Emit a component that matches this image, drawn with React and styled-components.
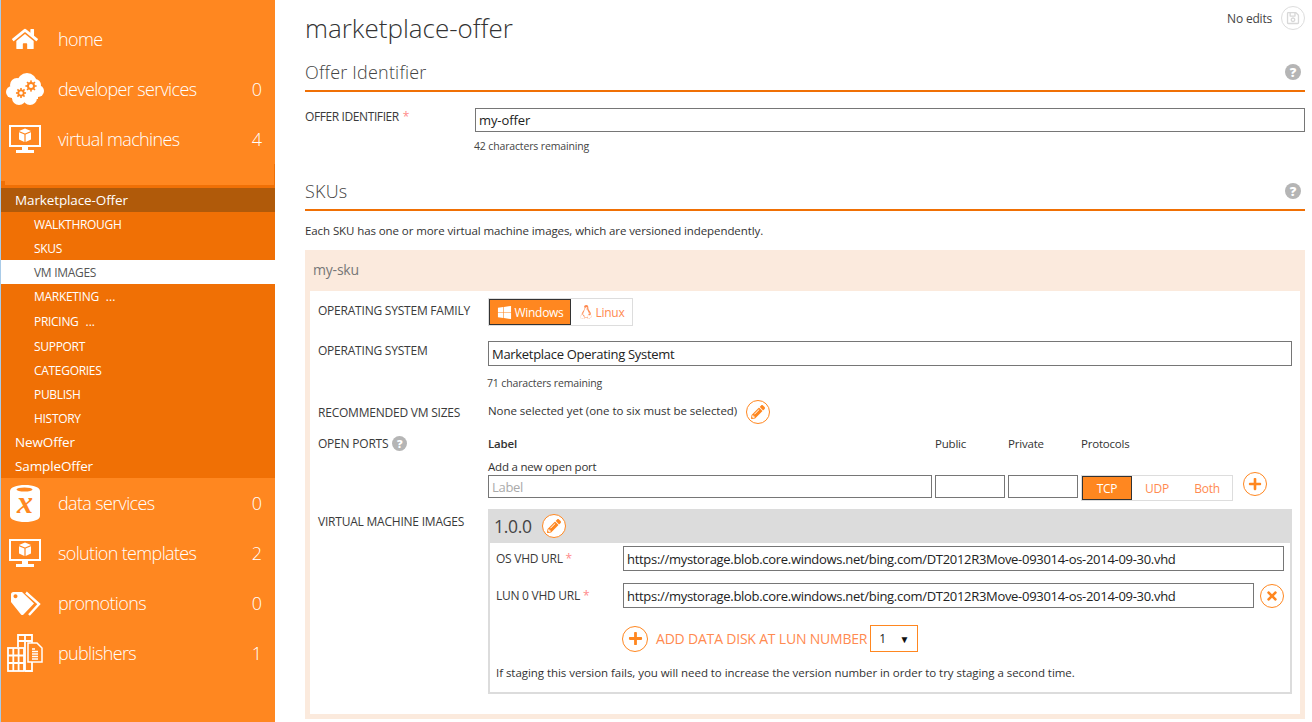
import React from "react";
import styled, { createGlobalStyle } from "styled-components";
import { FaHome, FaPencilAlt, FaPlus, FaTimes, FaWindows, FaLinux, FaRegSave } from "react-icons/fa";

const Global = createGlobalStyle`
  html, body { margin: 0; padding: 0; height: 100%; overflow: hidden; background: #fff; }
  * { box-sizing: border-box; }
  body { font-family: "Open Sans", "Noto Sans", sans-serif; font-size: 12px; color: #333; }
`;
const Page = styled.div`display: flex; width: 1312px; height: 722px; overflow: hidden;`;
const Sidebar = styled.nav`
  width: 275px; flex: none; height: 722px; background: #ff8720; border-left: 1px solid #a9cbe8;
  padding-top: 14px; color: #fff;
`;
const NavItem = styled.div`
  display: flex; align-items: center; height: 50px; padding-right: 13px;
`;
const NavIcon = styled.div`
  width: 57px; flex: none; display: flex; justify-content: center; padding-right: 9px; color: #fff;
`;
const NavText = styled.span`
  flex: 1; font-weight: 300; font-size: 18px; letter-spacing: -0.65px; white-space: nowrap;
`;
const NavCount = styled.span`font-weight: 300; font-size: 18px;`;
const Spacer = styled.div`height: 21px;`;
const SubNav = styled.div`
  position: relative; background: #f07005; padding-top: 3px;
  &::before { content: ""; position: absolute; left: 0; top: -4px; width: 4px; height: 4px; background: #f07005; }
  &::after { content: ""; position: absolute; right: 0; top: -21px; width: 1px; height: 21px; background: #f07005; }
`;
const OfferRow = styled.div`
  height: 24px; display: flex; align-items: center; padding-left: 14px; font-size: 13.5px; letter-spacing: -0.12px; color: #fff;
  background: ${p => (p.$active ? "#b05a0a" : "transparent")};
`;
const SubItem = styled.div`
  height: ${p => p.$h || 24}px; display: flex; align-items: center; padding-left: 33px; font-size: 12px; letter-spacing: -0.3px;
  color: ${p => (p.$active ? "#555" : "#fff")}; background: ${p => (p.$active ? "#fff" : "transparent")};
`;
const Dots = styled.span`margin-left: 7px; font-size: 12px; letter-spacing: 0;`;

const Main = styled.main`flex: 1; padding: 0 7px 0 30px; position: relative; min-width: 0;`;
const Title = styled.h1`
  margin: 0; height: 56px; display: flex; align-items: center; font-weight: 300; font-size: 26px; letter-spacing: 0; color: #333;
`;
const SaveArea = styled.div`
  position: absolute; right: 7px; top: 6px; display: flex; align-items: center; gap: 9px; font-size: 12px; letter-spacing: -0.2px; color: #444;
`;
const SaveCircle = styled.span`
  width: 24px; height: 24px; border-radius: 50%; border: 1px solid #ddd; color: #d8d8d8; display: flex; align-items: center; justify-content: center; font-size: 14px;
`;
const SectionHead = styled.div`
  display: flex; align-items: flex-end; justify-content: space-between; height: ${p => p.$h || 36}px; line-height: 24px;
  border-bottom: 2px solid #f07005; font-weight: 300; font-size: 18px; letter-spacing: 0.2px; padding: 0 4px 6px 0; color: #444;
`;
const HelpDot = styled.span`
  width: ${p => p.$s || 16}px; height: ${p => p.$s || 16}px; border-radius: 50%; background: #b5b5b5; color: #fff; display: inline-flex;
  align-items: center; justify-content: center; font-weight: 800; font-size: ${p => (p.$s ? 11 : 13)}px; letter-spacing: 0; flex: none; line-height: 1;
`;
const SectionHelp = styled(HelpDot)`margin-bottom: 4px;`;
const IdRow = styled.div`display: grid; grid-template-columns: 170px 1fr; margin-top: 16px;`;
const Label = styled.label`
  font-size: 12px; letter-spacing: ${p => p.$ls || "-0.22px"}; color: #3a3a3a; text-transform: uppercase; white-space: nowrap; display: flex; align-items: center; gap: 4px; height: ${p => p.$h || 18}px;
`;
const Req = styled.span`color: #ff8a8a;`;
const Input = styled.input`
  display: block; width: ${p => p.$w || "100%"}; height: ${p => p.$h || 25}px; border: 1px solid #767676; padding: 0 3px; margin: 0; background: #fff; outline: none;
  font-family: "Open Sans", sans-serif; font-size: 13px; letter-spacing: ${p => p.$ls || "-0.3px"}; color: #222; flex: ${p => (p.$grow ? 1 : "none")}; min-width: 0;
  &::placeholder { color: #aaa; }
`;
const Hint = styled.div`font-size: 10.5px; letter-spacing: -0.15px; color: #444; margin-top: ${p => p.$m || 7}px; margin-left: -1px; line-height: 14px;`;
const Desc = styled.p`margin: 11px 0 10px; font-size: 11.5px; letter-spacing: -0.09px; line-height: 18px; color: #333;`;
const SkuPanel = styled.section`background: #fbeadd; padding: 0 5px 5px; height: 469px;`;
const SkuHead = styled.div`height: 41px; display: flex; align-items: center; padding: 0 0 2px 3px; font-size: 14px; letter-spacing: -0.2px; color: #777;`;
const SkuBody = styled.div`background: #fff; padding: 7px 8px 0 8px; height: 423px;`;
const FormRow = styled.div`
  display: grid; grid-template-columns: 170px 1fr; height: ${p => p.$h}px; align-items: start;
`;
const LabelSlot = styled.div`padding-top: ${p => p.$t || 0}px;`;
const Segment = styled.div`
  display: inline-flex; justify-self: start; border: 1px solid #ddd; height: ${p => p.$h || 28}px; background: #fff;
`;
const SegBtn = styled.div`
  width: ${p => p.$w}px; display: flex; align-items: center; justify-content: center; gap: 3px; font-size: 12px; letter-spacing: -0.3px;
  color: ${p => (p.$on ? "#fff" : "#ff8a50")}; background: ${p => (p.$on ? "#ff8720" : "transparent")}; border: 1px solid ${p => (p.$on ? "#333" : "transparent")};
`;
const Inline = styled.div`display: flex; align-items: center; gap: 9px; height: 24px;`;
const NoneText = styled.span`font-size: 11.5px; letter-spacing: -0.05px; line-height: 16px; margin-top: -2px;`;
const Round = styled.span`
  width: ${p => p.$s || 24}px; height: ${p => p.$s || 24}px; border-radius: 50%; border: 1px solid #ff8720; color: #ff8720; background: #fff;
  display: inline-flex; align-items: center; justify-content: center; flex: none; font-size: ${p => p.$i || 14}px;
`;
const PortHead = styled.div`
  display: grid; grid-template-columns: 447px 73px 73px auto; height: 18px; align-items: center; font-size: 11.5px; letter-spacing: -0.2px; color: #333;
`;
const PortHeadLabel = styled.span`font-weight: 600;`;
const PortHint = styled.div`font-size: 11.5px; letter-spacing: -0.2px; line-height: 16px; margin-top: 7px;`;
const PortRow = styled.div`display: flex; align-items: flex-start; gap: 3px;`;
const PlusWrap = styled.div`margin-left: 7px; margin-top: -3px;`;
const VmPanel = styled.div`border: 2px solid #dcdcdc; border-top: 0; height: 185px;`;
const VmHead = styled.div`
  height: 34px; background: #dcdcdc; margin: 0 -2px; padding-left: 6px; display: flex; align-items: center; gap: 10px; font-size: 17.5px; font-weight: 400; letter-spacing: -0.3px; color: #444;
`;
const UrlRow = styled.div`
  display: flex; align-items: center; gap: 6px; padding: 0 6px; height: 25px; margin-top: ${p => p.$m}px;
`;
const UrlLabel = styled.span`
  width: 121px; flex: none; font-size: 12px; letter-spacing: -0.26px; white-space: nowrap; text-transform: uppercase; color: #3a3a3a;
`;
const AddRow = styled.div`display: flex; align-items: center; margin: 17px 0 0 132px; height: 27px; gap: 8px; color: #ff8a50; font-size: 14px; letter-spacing: -0.2px;`;
const Select = styled.div`
  width: 48px; height: 27px; border: 1px solid #ff8720; margin-left: -5px; display: flex; align-items: center; justify-content: space-between; padding: 0 8px; color: #222; font-size: 12px;
`;
const Caret = styled.span`font-size: 10px; color: #111;`;
const Note = styled.p`margin: 13px 0 0 6px; font-size: 11.5px; letter-spacing: -0.05px; line-height: 16px; color: #333;`;

const Gear = ({ x, y, r }) => (
  <g transform={`translate(${x} ${y})`}>
    {[0, 45, 90, 135].map(a => (
      <rect key={a} x={-r * 1.4} y={-0.8} width={r * 2.8} height={1.6} fill="#ff8720" transform={`rotate(${a})`} />
    ))}
    <circle r={r} fill="#ff8720" />
    <circle r={r * 0.5} fill="#fff" />
  </g>
);
const Cloud = () => (
  <svg width="38" height="32" viewBox="0 0 38 32">
    <g fill="#fff">
      <circle cx="21" cy="10" r="10" /><circle cx="11" cy="12" r="7" /><circle cx="6" cy="19" r="6" />
      <circle cx="13" cy="25" r="7" /><circle cx="24" cy="25" r="7" /><circle cx="32" cy="18" r="6" /><circle cx="29" cy="12" r="6" />
      <rect x="6" y="12" width="26" height="14" />
    </g>
    <Gear x={15} y={20} r={3.6} />
    <Gear x={25} y={13} r={4} />
  </svg>
);
const Monitor = () => (
  <svg width="32" height="28" viewBox="0 0 32 28">
    <rect x="1" y="1" width="30" height="20" fill="none" stroke="#fff" strokeWidth="2" />
    <path fill="#fff" d="M13 22h6v3h6v3H7v-3h6z" />
    <path fill="#fff" d="M16 3.500l6 2.500-6 2.500L10 6zM10 7.200l5.400 2.300v7.500l-5.400-2.500zM22 7.200l-5.400 2.300v7.500l5.400-2.500z" />
  </svg>
);
const Data = () => (
  <svg width="30" height="37" viewBox="0 0 30 37">
    <path fill="#fff" d="M0 6c0-3.500 6.500-6 15-6s15 2.500 15 6v25c0 3.500-6.500 6-15 6S0 34.500 0 31z" />
    <ellipse cx="14.500" cy="4.500" rx="8" ry="2" fill="#ff8720" />
    <text x="15" y="28" textAnchor="middle" fontFamily="Liberation Serif, serif" fontStyle="italic" fontWeight="700" fontSize="32" fill="#ff8720">x</text>
  </svg>
);
const Tags = () => (
  <svg width="31" height="25" viewBox="0 0 31 25">
    <path fill="#fff" fillRule="evenodd" d="M1 3.500Q1 1 3.500 1H12L24 12.500 13.500 23.500Q12.300 24.500 11 23.500L1 11zM5.500 3.200a2 2 0 1 0 .01 0z" />
    <path fill="none" stroke="#fff" strokeWidth="2.400" d="M16 1.500L29 13 19 24" />
  </svg>
);
const Publishers = () => (
  <svg width="36" height="38" viewBox="0 0 36 38">
    <g fill="none" stroke="#fff" strokeWidth="1.800">
      <path d="M11 13V1h14v36h-7" /><path d="M18 1v12M11 7h14" />
      <rect x="1" y="14" width="16" height="23" /><path d="M6.300 14v23M11.600 14v23M1 21.500h16M1 29h16" />
      <path d="M18 13v24" />
    </g>
    <path fill="#ff8720" stroke="#fff" strokeWidth="1.500" d="M21 9h9l5 5v14H21z" />
    <path stroke="#fff" strokeWidth="1.300" d="M25 15h3M25 17.500h6M25 20h6M25 22.500h6M25 25h6" />
  </svg>
);

const topNav = [
  ["home", "", <FaHome size={26} key="h" />],
  ["developer services", "0", <Cloud key="c" />],
  ["virtual machines", "4", <Monitor key="m" />],
];
const bottomNav = [
  ["data services", "0", <Data key="d" />],
  ["solution templates", "2", <Monitor key="s" />],
  ["promotions", "0", <Tags key="t" />],
  ["publishers", "1", <Publishers key="p" />],
];
const url = "https://mystorage.blob.core.windows.net/bing.com/DT2012R3Move-093014-os-2014-09-30.vhd";

export default function App() {
  const renderNav = ([t, c, i]) => (
    <NavItem key={t}><NavIcon>{i}</NavIcon><NavText>{t}</NavText><NavCount>{c}</NavCount></NavItem>
  );
  return (
    <Page>
      <Global />
      <Sidebar>
        {topNav.map(renderNav)}
        <Spacer />
        <SubNav>
          <OfferRow $active>Marketplace-Offer</OfferRow>
          <SubItem>WALKTHROUGH</SubItem>
          <SubItem>SKUS</SubItem>
          <SubItem $active>VM IMAGES</SubItem>
          <SubItem $h={25}>MARKETING<Dots>...</Dots></SubItem>
          <SubItem $h={25}>PRICING<Dots>...</Dots></SubItem>
          <SubItem>SUPPORT</SubItem>
          <SubItem>CATEGORIES</SubItem>
          <SubItem>PUBLISH</SubItem>
          <SubItem>HISTORY</SubItem>
          <OfferRow>NewOffer</OfferRow>
          <OfferRow>SampleOffer</OfferRow>
        </SubNav>
        {bottomNav.map(renderNav)}
      </Sidebar>
      <Main>
        <SaveArea>No edits<SaveCircle><FaRegSave /></SaveCircle></SaveArea>
        <Title>marketplace-offer</Title>
        <SectionHead>Offer Identifier<SectionHelp>?</SectionHelp></SectionHead>
        <IdRow>
          <Label $h={16} $ls="-0.4px">Offer Identifier <Req>*</Req></Label>
          <div>
            <Input $h={24} $ls="-0.1px" readOnly value="my-offer" />
            <Hint>42 characters remaining</Hint>
          </div>
        </IdRow>
        <SectionHead $h={58}>SKUs<SectionHelp>?</SectionHelp></SectionHead>
        <Desc>Each SKU has one or more virtual machine images, which are versioned independently.</Desc>
        <SkuPanel>
          <SkuHead>my-sku</SkuHead>
          <SkuBody>
            <FormRow $h={43}>
              <LabelSlot $t={3}><Label>Operating System Family</Label></LabelSlot>
              <Segment>
                <SegBtn $on $w={82}><FaWindows size={15} />Windows</SegBtn>
                <SegBtn $w={61}><FaLinux size={14} />Linux</SegBtn>
              </Segment>
            </FormRow>
            <FormRow $h={59}>
              <LabelSlot><Label>Operating System</Label></LabelSlot>
              <div>
                <Input readOnly value="Marketplace Operating Systemt" />
                <Hint $m={10}>71 characters remaining</Hint>
              </div>
            </FormRow>
            <FormRow $h={34}>
              <LabelSlot $t={3}><Label>Recommended VM Sizes</Label></LabelSlot>
              <Inline>
                <NoneText>None selected yet (one to six must be selected)</NoneText>
                <Round><FaPencilAlt /></Round>
              </Inline>
            </FormRow>
            <FormRow $h={75}>
              <LabelSlot><Label>Open Ports <HelpDot $s={15}>?</HelpDot></Label></LabelSlot>
              <div>
                <PortHead><PortHeadLabel>Label</PortHeadLabel><span>Public</span><span>Private</span><span>Protocols</span></PortHead>
                <PortHint>Add a new open port</PortHint>
                <PortRow>
                  <Input $w="444px" $h={23} placeholder="Label" readOnly />
                  <Input $w="70px" $h={23} readOnly />
                  <Input $w="70px" $h={23} readOnly />
                  <Segment $h={26}>
                    <SegBtn $on $w={50}>TCP</SegBtn>
                    <SegBtn $w={50}>UDP</SegBtn>
                    <SegBtn $w={50}>Both</SegBtn>
                  </Segment>
                  <PlusWrap><Round><FaPlus /></Round></PlusWrap>
                </PortRow>
              </div>
            </FormRow>
            <FormRow $h={204}>
              <LabelSlot $t={3}><Label>Virtual Machine Images</Label></LabelSlot>
              <VmPanel>
                <VmHead>1.0.0<Round><FaPencilAlt /></Round></VmHead>
                <UrlRow $m={3}>
                  <UrlLabel>OS VHD URL <Req>*</Req></UrlLabel>
                  <Input $grow readOnly value={url} />
                </UrlRow>
                <UrlRow $m={12}>
                  <UrlLabel>LUN 0 VHD URL <Req>*</Req></UrlLabel>
                  <Input $grow readOnly value={url} />
                  <Round $s={24}><FaTimes /></Round>
                </UrlRow>
                <AddRow>
                  <Round $s={26} $i={15}><FaPlus /></Round>
                  ADD DATA DISK AT LUN NUMBER
                  <Select>1<Caret>▼</Caret></Select>
                </AddRow>
                <Note>If staging this version fails, you will need to increase the version number in order to try staging a second time.</Note>
              </VmPanel>
            </FormRow>
          </SkuBody>
        </SkuPanel>
      </Main>
    </Page>
  );
}
